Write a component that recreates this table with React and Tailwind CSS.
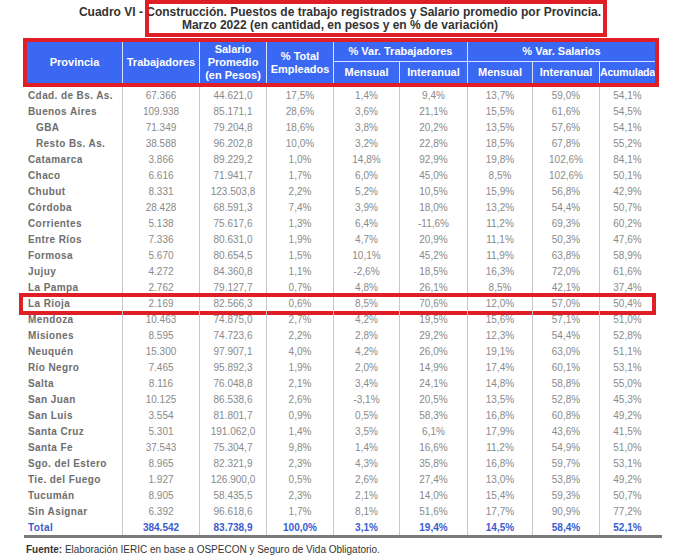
import React from "react";

const rows = [
  ["Cdad. de Bs. As.", "67.366", "44.621,0", "17,5%", "1,4%", "9,4%", "13,7%", "59,0%", "54,1%"],
  ["Buenos Aires", "109.938", "85.171,1", "28,6%", "3,6%", "21,1%", "15,5%", "61,6%", "54,5%"],
  ["GBA", "71.349", "79.204,8", "18,6%", "3,8%", "20,2%", "13,5%", "57,6%", "54,1%"],
  ["Resto Bs. As.", "38.588", "96.202,8", "10,0%", "3,2%", "22,8%", "18,5%", "67,8%", "55,2%"],
  ["Catamarca", "3.866", "89.229,2", "1,0%", "14,8%", "92,9%", "19,8%", "102,6%", "84,1%"],
  ["Chaco", "6.616", "71.941,7", "1,7%", "6,0%", "45,0%", "8,5%", "102,6%", "50,1%"],
  ["Chubut", "8.331", "123.503,8", "2,2%", "5,2%", "10,5%", "15,9%", "56,8%", "42,9%"],
  ["Córdoba", "28.428", "68.591,3", "7,4%", "3,9%", "18,0%", "13,2%", "54,4%", "50,7%"],
  ["Corrientes", "5.138", "75.617,6", "1,3%", "6,4%", "-11,6%", "11,2%", "69,3%", "60,2%"],
  ["Entre Ríos", "7.336", "80.631,0", "1,9%", "4,7%", "20,9%", "11,1%", "50,3%", "47,6%"],
  ["Formosa", "5.670", "80.654,5", "1,5%", "10,1%", "45,2%", "11,9%", "63,8%", "58,9%"],
  ["Jujuy", "4.272", "84.360,8", "1,1%", "-2,6%", "18,5%", "16,3%", "72,0%", "61,6%"],
  ["La Pampa", "2.762", "79.127,7", "0,7%", "4,8%", "26,1%", "8,5%", "42,1%", "37,4%"],
  ["La Rioja", "2.169", "82.566,3", "0,6%", "8,5%", "70,6%", "12,0%", "57,0%", "50,4%"],
  ["Mendoza", "10.463", "74.875,0", "2,7%", "4,2%", "19,5%", "15,6%", "57,1%", "51,0%"],
  ["Misiones", "8.595", "74.723,6", "2,2%", "2,8%", "29,2%", "12,3%", "54,4%", "52,8%"],
  ["Neuquén", "15.300", "97.907,1", "4,0%", "4,2%", "26,0%", "19,1%", "63,0%", "51,1%"],
  ["Río Negro", "7.465", "95.892,3", "1,9%", "2,0%", "14,9%", "17,4%", "60,1%", "53,1%"],
  ["Salta", "8.116", "76.048,8", "2,1%", "3,4%", "24,1%", "14,8%", "58,8%", "55,0%"],
  ["San Juan", "10.125", "86.538,6", "2,6%", "-3,1%", "20,5%", "13,5%", "52,8%", "45,3%"],
  ["San Luis", "3.554", "81.801,7", "0,9%", "0,5%", "58,3%", "16,8%", "60,8%", "49,2%"],
  ["Santa Cruz", "5.301", "191.062,0", "1,4%", "3,5%", "6,1%", "17,9%", "43,6%", "41,5%"],
  ["Santa Fe", "37.543", "75.304,7", "9,8%", "1,4%", "16,6%", "11,2%", "54,9%", "51,0%"],
  ["Sgo. del Estero", "8.965", "82.321,9", "2,3%", "4,3%", "35,8%", "16,8%", "59,7%", "53,1%"],
  ["Tie. del Fuego", "1.927", "126.900,0", "0,5%", "2,6%", "27,4%", "13,0%", "53,8%", "49,2%"],
  ["Tucumán", "8.905", "58.435,5", "2,3%", "2,1%", "14,0%", "15,4%", "59,3%", "50,7%"],
  ["Sin Asignar", "6.392", "96.618,6", "1,7%", "8,1%", "51,6%", "17,7%", "90,9%", "77,2%"],
];

const total = ["Total", "384.542", "83.738,9", "100,0%", "3,1%", "19,4%", "14,5%", "58,4%", "52,1%"];

const grid = "grid grid-cols-[95px_77px_67px_67px_66px_68px_65px_67px_56px]";

const Row = ({ cells, isTotal, indent, marked }) => (
  <div className={`${grid} relative h-[16px] items-center text-[10px]`}>
    {cells.map((c, i) =>
      i === 0 ? (
        <div
          key={i}
          className={`h-full flex items-center font-bold tracking-[0.4px] ${
            indent ? "pl-[9px]" : "pl-[1px]"
          } ${isTotal ? "text-[#3a5bd0]" : "text-[#6e6e6e]"}`}
        >
          {c}
        </div>
      ) : (
        <div
          key={i}
          className={`h-full flex items-center justify-center border-l border-[#c8c8c8] ${
            isTotal ? "font-bold text-[#3a5bd0]" : "text-[#8a8a8a]"
          }`}
        >
          {c}
        </div>
      )
    )}
    {marked && (
      <div className="absolute -top-[2px] -bottom-[4px] -left-[8px] -right-[1px] border-[4px] border-[#e01e26]" />
    )}
  </div>
);

const App = () => {
  return (
    <div className="relative w-[676px] h-[559px] bg-white font-['Liberation_Sans',Arial,sans-serif] overflow-hidden">
      {/* title */}
      <div className="pt-[6px] text-center font-bold text-[12px] leading-[13px] text-[#333] pl-[4px]">
        <div>Cuadro VI - Construcción. Puestos de trabajo registrados y Salario promedio por Provincia.</div>
        <div>Marzo 2022 (en cantidad, en pesos y en % de variación)</div>
      </div>
      <div className="absolute left-[145px] top-0 w-[462px] h-[37px] border-[4px] border-[#e01e26]" />

      <div className="ml-[27px] w-[628px] mt-[10px]">
        {/* header */}
        <div
          className={`${grid} grid-rows-[20px_21px] bg-[#3b68f2] text-white font-bold text-[11px] leading-[13px] text-center outline-[4px] outline-[#e01e26]`}
        >
          <div className="row-span-2 flex items-center justify-center">Provincia</div>
          <div className="row-span-2 flex items-center justify-center border-l border-white/80">Trabajadores</div>
          <div className="row-span-2 flex items-center justify-center border-l border-white/80">
            Salario
            <br />
            Promedio
            <br />
            (en Pesos)
          </div>
          <div className="row-span-2 flex items-center justify-center border-l border-white/80">
            % Total
            <br />
            Empleados
          </div>
          <div className="col-span-2 flex items-center justify-center border-l border-b border-white/80">% Var. Trabajadores</div>
          <div className="col-span-3 flex items-center justify-center border-l border-b border-white/80">% Var. Salarios</div>
          <div className="flex items-center justify-center border-l border-white/80">Mensual</div>
          <div className="flex items-center justify-center border-l border-white/80">Interanual</div>
          <div className="flex items-center justify-center border-l border-white/80">Mensual</div>
          <div className="flex items-center justify-center border-l border-white/80">Interanual</div>
          <div className="flex items-center justify-center border-l border-white/80 text-[10.5px] tracking-[-0.2px] whitespace-nowrap">Acumulada</div>
        </div>

        {/* body */}
        <div className="mt-[4px]">
          {rows.map((r, i) => (
            <Row key={r[0]} cells={r} indent={i === 2 || i === 3} marked={r[0] === "La Rioja"} />
          ))}
          <Row cells={total} isTotal />
        </div>
        <div className="-ml-[3px] w-[638px] h-[3px] bg-[#7a7a7a]" />
      </div>

      <div className="ml-[26px] mt-[4px] text-[10px] text-[#333]">
        <span className="font-bold">Fuente:</span> Elaboración IERIC en base a OSPECON y Seguro de Vida Obligatorio.
      </div>
    </div>
  );
};

export default App;
